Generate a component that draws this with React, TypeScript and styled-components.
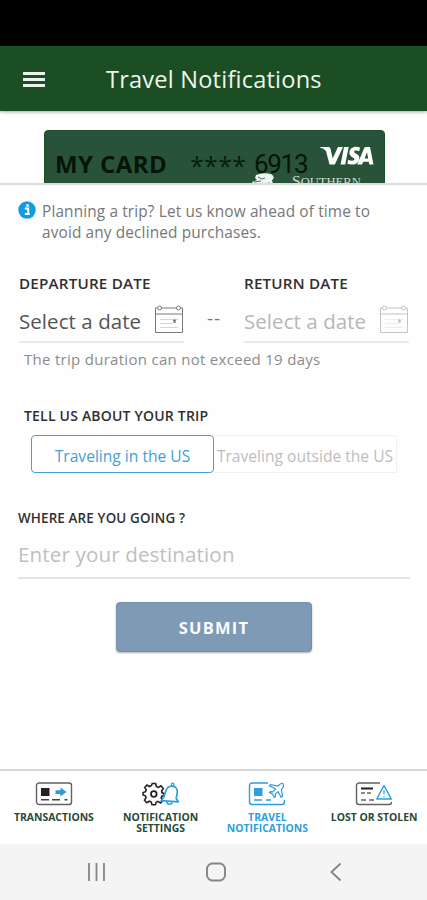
import React from 'react';
import styled, { createGlobalStyle } from 'styled-components';

const GlobalStyle = createGlobalStyle`
  * { box-sizing: border-box; }
  body { margin: 0; background: #fff; font-family: "Open Sans", "Noto Sans", sans-serif; }
  button, input { font-family: inherit; }
`;

const Screen = styled.div`
  width: 427px;
  height: 900px;
  display: flex;
  flex-direction: column;
  overflow: hidden;
  background: #fefefe;
`;

const StatusBar = styled.div`
  height: 46px;
  flex: none;
  background: #000;
`;

const Header = styled.header`
  height: 65px;
  flex: none;
  display: flex;
  align-items: center;
  padding: 2px 0 0 23px;
  background: #1b4e23;
  box-shadow: 0 1px 3px rgba(0, 0, 0, 0.35);
  z-index: 1;
`;

const MenuButton = styled.button`
  width: 22px;
  height: 15px;
  padding: 0;
  border: 0;
  background: none;
  display: flex;
  flex-direction: column;
  justify-content: space-between;
  span { height: 3px; background: #edf1eb; }
`;

const Title = styled.h1`
  margin: -1px 0 0 61px;
  font-size: 23.6px;
  line-height: 32px;
  font-weight: 400;
  color: #eef4ee;
  white-space: nowrap;
  letter-spacing: 0.2px;
`;

const CardStrip = styled.section`
  height: 74px;
  flex: none;
  padding: 19px 42px 0 44px;
  overflow: hidden;
  border-bottom: 2px solid #dcdcdc;
`;

const Card = styled.div`
  position: relative;
  height: 80px;
  border-radius: 4px 4px 0 0;
  border: 1px solid #1d5029;
  background: #295338;
  display: flex;
  align-items: flex-start;
  padding: 15px 0 0 10px;
  white-space: nowrap;
`;

const CardName = styled.span`
  width: 135px;
  font-size: 24px;
  line-height: 35px;
  font-weight: 700;
  color: #06150a;
  letter-spacing: 0.4px;
`;

const CardStars = styled.span`
  width: 64px;
  font-size: 25px;
  line-height: 38px;
  letter-spacing: 0.3px;
  color: #0a1c0e;
`;

const CardNumber = styled.span`
  font-family: Roboto, sans-serif;
  font-size: 26px;
  line-height: 37px;
  letter-spacing: -1.3px;
  color: #06150a;
`;

const Visa = styled.svg`
  position: absolute;
  left: 275px;
  top: 15px;
`;

const BankMark = styled.svg`
  position: absolute;
  left: 206px;
  top: 42px;
`;

const BankName = styled.span`
  position: absolute;
  left: 247px;
  top: 41px;
  font-family: "Liberation Serif", serif;
  font-size: 12.6px;
  line-height: 18px;
  color: #d3ddd5;
  &::first-letter { font-size: 15.5px; }
`;

const Form = styled.main`
  flex: 1;
  display: flex;
  flex-direction: column;
  padding: 16px 17px 0 18px;
  white-space: nowrap;
`;

const Notice = styled.div`
  display: flex;
  gap: 6px;
  height: 72px;
`;

const NoticeText = styled.p`
  margin: 0;
  font-size: 15.4px;
  line-height: 21px;
  color: #777;
  letter-spacing: 0.13px;
`;

const Dates = styled.div`
  display: flex;
  justify-content: space-between;
  height: 70px;
  padding: 0 1px;
`;

const DateField = styled.div`
  width: 165px;
  border-bottom: 2px solid #eaeaea;
`;

const Label = styled.div<{ $size: number; $indent?: number; $spacing?: number }>`
  padding-left: ${(p) => p.$indent ?? 0}px;
  font-size: ${(p) => p.$size}px;
  line-height: 20px;
  font-weight: 600;
  color: #303030;
  letter-spacing: ${(p) => p.$spacing ?? 0}px;
`;

const DateValue = styled.div<{ $muted?: boolean }>`
  display: flex;
  justify-content: space-between;
  align-items: center;
  height: 34px;
  margin-top: 11px;
  font-size: 20.5px;
  letter-spacing: 0.06px;
  color: ${(p) => (p.$muted ? '#b7b7b7' : '#555')};
  svg { stroke: ${(p) => (p.$muted ? '#c4c4c4' : '#7a7a7a')}; margin-top: -2px; }
`;

const Dash = styled.span`
  padding-top: 32px;
  font-size: 19px;
  line-height: 26px;
  letter-spacing: 1px;
  color: #777;
`;

const Hint = styled.div`
  height: 63px;
  padding: 6px 0 0 6px;
  font-size: 15px;
  line-height: 20px;
  color: #8c8c8c;
  letter-spacing: 0.29px;
`;

const Toggle = styled.div`
  display: flex;
  margin: 9px 11px 35px 13px;
  height: 38px;
`;

const Option = styled.button<{ $active?: boolean }>`
  flex: none;
  width: 183px;
  padding: 4px 0 0;
  border: 1px solid ${(p) => (p.$active ? '#4b9ed3' : '#f1f1f1')};
  border-left-width: ${(p) => (p.$active ? 1 : 0)}px;
  border-radius: ${(p) => (p.$active ? 4 : 1)}px;
  background: #fff;
  font-size: 15.6px;
  line-height: 22px;
  color: ${(p) => (p.$active ? '#3da2da' : '#bdbdbd')};
`;

const Destination = styled.input`
  height: 51px;
  width: 392px;
  padding: 2px 0 0;
  border: 0;
  border-bottom: 2px solid #e4e4e4;
  background: none;
  font-size: 20.6px;
  letter-spacing: 0.12px;
  outline: 0;
  &::placeholder { color: #bfbfbf; opacity: 1; }
`;

const Submit = styled.button`
  margin: 23px 0 0 98px;
  width: 196px;
  height: 50px;
  padding: 0;
  border: 1px solid #7391ad;
  border-radius: 4px;
  background: #7f9ab4;
  box-shadow: 0 1px 2px rgba(0, 0, 0, 0.3);
  color: #f9fcff;
  font-size: 16.5px;
  font-weight: 700;
  letter-spacing: 1.2px;
`;

const TabBar = styled.nav`
  flex: none;
  height: 75px;
  border-top: 2px solid #d6d6d6;
  display: grid;
  grid-template-columns: repeat(4, 106.75px);
  padding-left: 0.5px;
  background: #fff;
`;

const Tab = styled.div<{ $active?: boolean }>`
  display: flex;
  flex-direction: column;
  align-items: center;
  padding-top: 11px;
  font-size: 10.4px;
  line-height: 10.8px;
  font-weight: 700;
  text-align: center;
  white-space: pre-line;
  color: ${(p) => (p.$active ? '#2b9fe0' : '#264b37')};
  svg { margin-bottom: 6px; flex: none; }
`;

const SystemBar = styled.div`
  flex: none;
  height: 56px;
  display: grid;
  grid-template-columns: 119px 124px 12px;
  align-items: center;
  padding-left: 87px;
  background: #f4f4f4;
`;

const InfoIcon = () => (
  <svg width="18" height="18" viewBox="0 0 18 18">
    <circle cx="9" cy="9" r="8.7" fill="#109be8" />
    <circle cx="9.5" cy="4.6" r="1.5" fill="#fff" />
    <path d="M6.8 7.5h3.4v5M6.8 13h5" stroke="#fff" strokeWidth="2" fill="none" />
  </svg>
);

const CalendarIcon = () => (
  <svg width="30" height="30" viewBox="0 0 30 30" fill="none">
    <path d="M7 3h16M4 3H1.5v24.5h27V3H26M1.5 9h27" />
    <circle cx="5.5" cy="3" r="2" />
    <circle cx="24.5" cy="3" r="2" />
    <path d="M6 14.5h18M6 18.5h13M6 22.5h18" opacity=".3" />
    <path d="M19 15.5h3M19 17h3M20.5 14v4" />
  </svg>
);

const TransactionsIcon = () => (
  <svg width="38" height="24" viewBox="0 0 38 24" fill="none">
    <rect x="1.5" y="1" width="35" height="21.5" rx="2.5" stroke="#626262" strokeWidth="1.4" />
    <path d="M6 6h8.5v8H6z" fill="#222" />
    <path d="M6 17.7h8M17 17.7h8M29.5 17.7h3" stroke="#444" strokeWidth="1.5" />
    <path d="M20.5 8.2h5V5.6l6 4.5-6 4.5V12h-5z" fill="#279ddd" />
  </svg>
);

const SettingsIcon = () => (
  <svg width="38" height="24" viewBox="0 0 38 24" fill="none">
    <path
      d="M10.2 1.5h3.4l.7 3 2.1.9 2.6-1.6 2.3 2.8-1.7 2.4.5 1.8 2 .8v1.8l-2.3.8-.6 1.7 1.5 2.8-2.2 2.2-2.6-1.5-1.7.8-.8 2.6H10l-.8-2.7-1.8-.9-2.7 1.5-2.2-2.5 1.6-2.6-.7-1.8-2.3-.8v-2.5l2.4-.8.7-1.9-1.4-2.4 2.2-2.4 2.5 1.5 2-1z"
      stroke="#222"
      strokeWidth="1.6"
    />
    <circle cx="11.8" cy="12" r="2.8" stroke="#222" strokeWidth="1.8" />
    <path
      d="M19.2 18.6l17.2 1.3-2.2-3.4 1.1-6.4c.2-3.5-1.9-5.6-4.2-5.8-3.6-.4-6.4 1.6-7.3 4.7-.9 3.6-1.2 6.4-4.6 9.6z"
      fill="#fff"
      stroke="#2b9fe0"
      strokeWidth="1.7"
      strokeLinejoin="round"
    />
    <circle cx="30.7" cy="2.4" r="1.3" stroke="#2b9fe0" strokeWidth="1.2" />
    <path d="M24.8 19.8c.3 3 4.6 3.2 5.5.4" stroke="#2b9fe0" strokeWidth="1.6" />
  </svg>
);

const TravelIcon = () => (
  <svg width="38" height="24" viewBox="0 0 38 24" fill="none" stroke="#2b9fe0">
    <path d="M20 1H4a2.5 2.5 0 0 0-2.5 2.5V20A2.5 2.5 0 0 0 4 22.5h30a2.5 2.5 0 0 0 2.5-2.5v-2" strokeWidth="1.4" />
    <path d="M6 6h8.5v8H6z" fill="#2b9fe0" stroke="none" />
    <path d="M6 18h8M18 18h5" strokeWidth="1.5" />
    <path
      d="M34.8 1.5c-1.5-.5-3.3.8-4.8 2.5l-7.5-1.3-1 1.2 6 3.1-2.7 2.9-2.4-.3-1 1 3.4 1.7 1.5 3.2 1.1-1-.1-2.4 2.8-2.5 3 5.7 1.3-1-.9-7c1.8-1.8 2.8-3.8 1.3-5.8z"
      strokeWidth="1.2"
    />
  </svg>
);

const LostIcon = () => (
  <svg width="38" height="24" viewBox="0 0 38 24" fill="none">
    <path d="M25 1H4a2.5 2.5 0 0 0-2.5 2.5V20A2.5 2.5 0 0 0 4 22.5h30a2.5 2.5 0 0 0 2.5-2.5" stroke="#626262" strokeWidth="1.4" />
    <path d="M6 6.5h12" stroke="#222" strokeWidth="2" />
    <path d="M6 11h4M12 11h4M6 18h5M14 18h5" stroke="#666" strokeWidth="1.4" />
    <path d="M29 3.5L36.3 17H21.8z" fill="#fff" stroke="#2b9fe0" strokeWidth="1.5" strokeLinejoin="round" />
    <path d="M29 8v4.5M29 14v1.3" stroke="#2b9fe0" strokeWidth="1.2" />
  </svg>
);

const tabs = [
  { label: 'TRANSACTIONS', Icon: TransactionsIcon },
  { label: 'NOTIFICATION\nSETTINGS', Icon: SettingsIcon },
  { label: 'TRAVEL\nNOTIFICATIONS', Icon: TravelIcon, active: true },
  { label: 'LOST OR STOLEN', Icon: LostIcon },
];

export default function App() {
  return (
    <Screen>
      <GlobalStyle />
      <StatusBar />
      <Header>
        <MenuButton aria-label="Menu"><span /><span /><span /></MenuButton>
        <Title>Travel Notifications</Title>
      </Header>
      <CardStrip>
        <Card>
          <CardName>MY CARD</CardName>
          <CardStars>****</CardStars>
          <CardNumber>6913</CardNumber>
          <Visa width="54" height="20" viewBox="0 0 54 20" fill="#fff" role="img" aria-label="Visa">
            <path d="M0 1h8.5q1.7 0 2.1 2l2 9.5L18 1h5L14.8 18.5H9.5L6 5Q4 2.2 0 1.4z" />
            <path d="M24 1h4.7l-3.5 17.5h-4.6z" />
            <path d="M40 1.5l-.8 3.8c-2.6-1.1-5-.9-5 .5 0 1.8 5.2 2 5.2 6.4 0 5.6-6.4 7.6-12 5.5l.8-4c2.5 1.4 6.2 1.5 6.2-.4 0-2-5-2.1-5-6.5C29.4 1.5 35-.6 40 1.5z" />
            <path fillRule="evenodd" d="M46 1h4l3.5 17.5h-4.2l-.5-2.7h-5.6l-1.2 2.7h-4.7L44 2.4Q44.6 1 46 1zm1 5.3l-2.4 6.1h3.6z" />
          </Visa>
          <BankMark width="26" height="14" viewBox="0 0 26 14">
            <path d="M5 2q8-3 16-.5l2 3-2 3 2 6H4L1 9l5-2-2-2z" fill="#edf3ee" />
            <path d="M7 4l4 2 3-1M3 9l7-1M15 13l2-3 5 1" stroke="#526e5b" fill="none" />
          </BankMark>
          <BankName>SOUTHERN</BankName>
        </Card>
      </CardStrip>
      <Form>
        <Notice>
          <InfoIcon />
          <NoticeText>
            Planning a trip? Let us know ahead of time to<br />avoid any declined purchases.
          </NoticeText>
        </Notice>
        <Dates>
          <DateField>
            <Label $size={15.2} $spacing={0.2}>DEPARTURE DATE</Label>
            <DateValue>Select a date<CalendarIcon /></DateValue>
          </DateField>
          <Dash>--</Dash>
          <DateField>
            <Label $size={15.2} $spacing={0.2}>RETURN DATE</Label>
            <DateValue $muted>Select a date<CalendarIcon /></DateValue>
          </DateField>
        </Dates>
        <Hint>The trip duration can not exceed 19 days</Hint>
        <Label $size={14} $indent={6} $spacing={0.2}>TELL US ABOUT YOUR TRIP</Label>
        <Toggle>
          <Option $active>Traveling in the US</Option>
          <Option>Traveling outside the US</Option>
        </Toggle>
        <Label $size={13.4} $spacing={0.15}>WHERE ARE YOU GOING ?</Label>
        <Destination placeholder="Enter your destination" />
        <Submit>SUBMIT</Submit>
      </Form>
      <TabBar>
        {tabs.map(({ label, Icon, active }) => (
          <Tab key={label} $active={active}><Icon />{label}</Tab>
        ))}
      </TabBar>
      <SystemBar>
        <svg width="20" height="20" viewBox="0 0 20 20" stroke="#858585" strokeWidth="1.8">
          <path d="M2 1v18M9.5 1v18M17 1v18" />
        </svg>
        <svg width="20" height="20" viewBox="0 0 20 20" fill="none" stroke="#858585" strokeWidth="1.9">
          <rect x="1" y="1.5" width="18" height="17" rx="5.5" />
        </svg>
        <svg width="12" height="20" viewBox="0 0 12 20" fill="none" stroke="#858585" strokeWidth="1.9">
          <path d="M10.5 1.5L1.5 10l9 8.5" />
        </svg>
      </SystemBar>
    </Screen>
  );
}
